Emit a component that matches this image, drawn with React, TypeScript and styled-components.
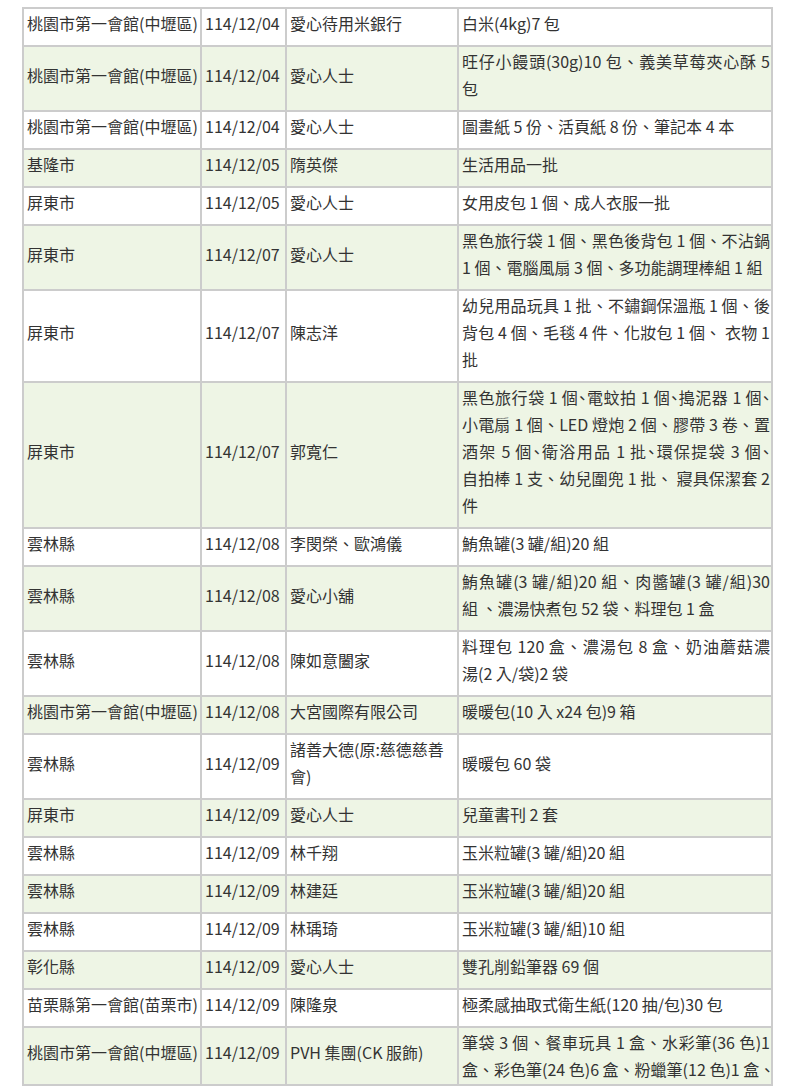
import React from "react";
import styled, { createGlobalStyle } from "styled-components";

const Global = createGlobalStyle`
  html, body { margin: 0; padding: 0; background: #ffffff; }
  body { font-family: "Noto Sans CJK TC", "Noto Sans", sans-serif; color: #333333; }
`;

const Page = styled.div`
  padding: 7px 23px 0 22px;
`;

const Table = styled.table`
  width: 749px;
  table-layout: fixed;
  border-collapse: collapse;
  border: 2px solid #cccccc;
  font-size: 16px;
  line-height: 27px;
`;

const Row = styled.tr<{ $alt: boolean }>`
  background: ${(p) => (p.$alt ? "#eef5e5" : "#ffffff")};
`;

const Cell = styled.td<{ $clip?: boolean }>`
  border: 2px solid #cccccc;
  padding: 1px 2px ${(p) => (p.$clip ? "1px" : "8px")} 3px;
  vertical-align: middle;
  text-align: left;
  word-break: break-all;
`;

const ItemCell = styled(Cell)`
  padding-right: 1px;
`;

const Items = styled.div`
  display: block;
`;

const Line = styled.span<{ $justify: boolean; $tight: boolean }>`
  display: block;
  white-space: nowrap;
  text-align: left;
  text-align-last: ${(p) => (p.$justify ? "justify" : "left")};
  font-feature-settings: ${(p) => (p.$tight ? '"halt"' : "normal")};
`;

type Entry = {
  place: string;
  date: string;
  donor: string;
  items: string[];
  tight?: number[];
  clip?: boolean;
};

const TY = "桃園市第一會館(中壢區)";

const data: Entry[] = [
  { place: TY, date: "114/12/04", donor: "愛心待用米銀行", items: ["白米(4kg)7 包"] },
  { place: TY, date: "114/12/04", donor: "愛心人士", items: ["旺仔小饅頭(30g)10 包、義美草莓夾心酥 5", "包"] },
  { place: TY, date: "114/12/04", donor: "愛心人士", items: ["圖畫紙 5 份、活頁紙 8 份、筆記本 4 本"] },
  { place: "基隆市", date: "114/12/05", donor: "隋英傑", items: ["生活用品一批"] },
  { place: "屏東市", date: "114/12/05", donor: "愛心人士", items: ["女用皮包 1 個、成人衣服一批"] },
  {
    place: "屏東市",
    date: "114/12/07",
    donor: "愛心人士",
    items: ["黑色旅行袋 1 個、黑色後背包 1 個、不沾鍋", "1 個、電腦風扇 3 個、多功能調理棒組 1 組"],
  },
  {
    place: "屏東市",
    date: "114/12/07",
    donor: "陳志洋",
    items: ["幼兒用品玩具 1 批、不鏽鋼保溫瓶 1 個、後", "背包 4 個、毛毯 4 件、化妝包 1 個、 衣物 1", "批"],
  },
  {
    place: "屏東市",
    date: "114/12/07",
    donor: "郭寬仁",
    items: [
      "黑色旅行袋 1 個、電蚊拍 1 個、搗泥器 1 個、",
      "小電扇 1 個、LED 燈炮 2 個、膠帶 3 卷、置",
      "酒架 5 個、衛浴用品 1 批、環保提袋 3 個、",
      "自拍棒 1 支、幼兒圍兜 1 批、 寢具保潔套 2",
      "件",
    ],
    tight: [0, 2],
  },
  { place: "雲林縣", date: "114/12/08", donor: "李閔榮、歐鴻儀", items: ["鮪魚罐(3 罐/組)20 組"] },
  {
    place: "雲林縣",
    date: "114/12/08",
    donor: "愛心小舖",
    items: ["鮪魚罐(3 罐/組)20 組、肉醬罐(3 罐/組)30", "組 、濃湯快煮包 52 袋、料理包 1 盒"],
  },
  {
    place: "雲林縣",
    date: "114/12/08",
    donor: "陳如意闔家",
    items: ["料理包 120 盒、濃湯包 8 盒、奶油蘑菇濃", "湯(2 入/袋)2 袋"],
  },
  { place: TY, date: "114/12/08", donor: "大宮國際有限公司", items: ["暖暖包(10 入 x24 包)9 箱"] },
  { place: "雲林縣", date: "114/12/09", donor: "諸善大德(原:慈德慈善會)", items: ["暖暖包 60 袋"] },
  { place: "屏東市", date: "114/12/09", donor: "愛心人士", items: ["兒童書刊 2 套"] },
  { place: "雲林縣", date: "114/12/09", donor: "林千翔", items: ["玉米粒罐(3 罐/組)20 組"] },
  { place: "雲林縣", date: "114/12/09", donor: "林建廷", items: ["玉米粒罐(3 罐/組)20 組"] },
  { place: "雲林縣", date: "114/12/09", donor: "林瑀琦", items: ["玉米粒罐(3 罐/組)10 組"] },
  { place: "彰化縣", date: "114/12/09", donor: "愛心人士", items: ["雙孔削鉛筆器 69 個"] },
  { place: "苗栗縣第一會館(苗栗市)", date: "114/12/09", donor: "陳隆泉", items: ["極柔感抽取式衛生紙(120 抽/包)30 包"] },
  {
    place: TY,
    date: "114/12/09",
    donor: "PVH 集團(CK 服飾)",
    items: ["筆袋 3 個、餐車玩具 1 盒、水彩筆(36 色)1", "盒、彩色筆(24 色)6 盒、粉蠟筆(12 色)1 盒、"],
    clip: true,
  },
];

export default function App() {
  return (
    <Page>
      <Global />
      <Table>
        <colgroup>
          <col style={{ width: 178 }} />
          <col style={{ width: 85 }} />
          <col style={{ width: 172 }} />
          <col style={{ width: 314 }} />
        </colgroup>
        <tbody>
          {data.map((d, i) => (
            <Row key={i} $alt={i % 2 === 1}>
              <Cell>{d.place}</Cell>
              <Cell>{d.date}</Cell>
              <Cell>{d.donor}</Cell>
              <ItemCell $clip={d.clip}>
                <Items>
                  {d.items.map((line, j) => (
                    <Line
                      key={j}
                      $justify={j < d.items.length - 1 || !!d.clip}
                      $tight={!!d.tight && d.tight.includes(j)}
                    >
                      {line}
                    </Line>
                  ))}
                </Items>
              </ItemCell>
            </Row>
          ))}
        </tbody>
      </Table>
    </Page>
  );
}
